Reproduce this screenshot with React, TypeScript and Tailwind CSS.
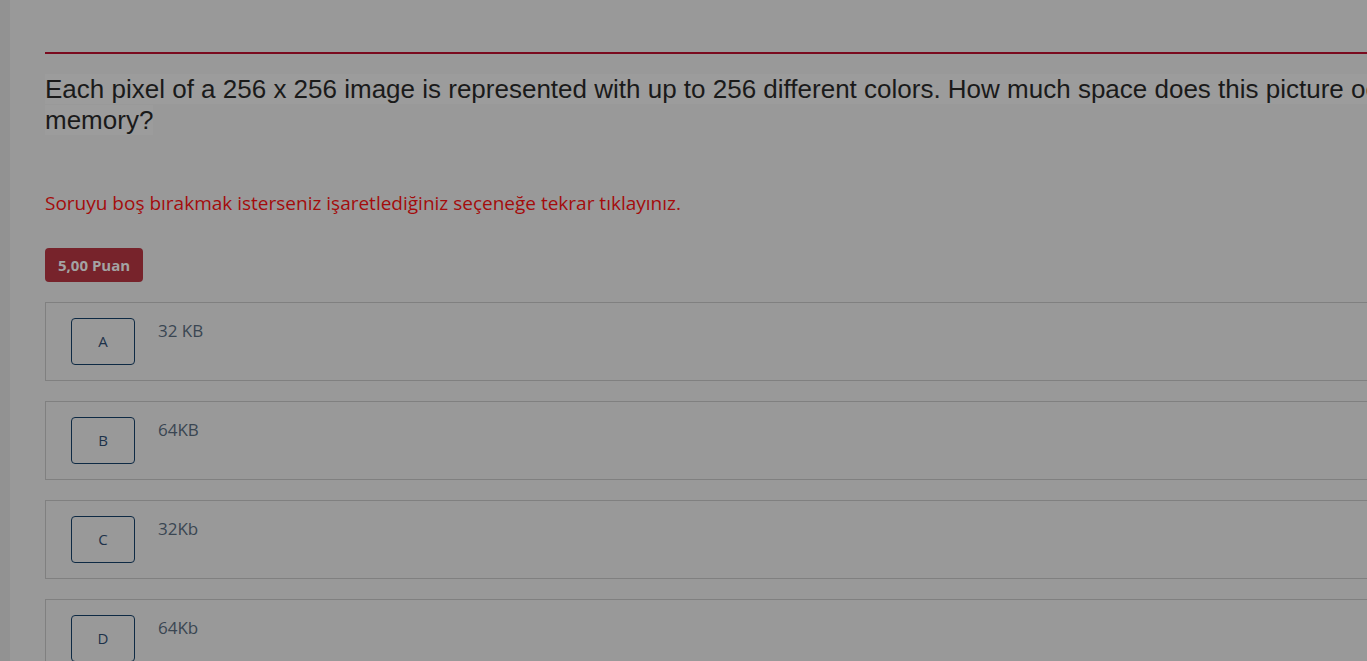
import React from 'react';

const options = [
    { letter: 'A', text: '32 KB' },
    { letter: 'B', text: '64KB' },
    { letter: 'C', text: '32Kb' },
    { letter: 'D', text: '64Kb' },
];

export default function App() {
    return (
        <div className="flex h-[661px] w-full overflow-hidden bg-[#999999]">
            {/* sidebar edge */}
            <div className="w-[10px] shrink-0 bg-[#929292]" />

            <div className="w-[1560px] shrink-0 pl-[35px] pt-[52px]">
                <div className="h-[2px] bg-[#7a0a1e]" />

                <p className="mt-[20px] w-[1505px] font-['Liberation_Sans',Arial,sans-serif] text-[26px] leading-[31px] text-[#1a1a1a]">
                    <span className="bg-[#9c9c9c]">
                        Each pixel of a 256 x 256 image is represented with up to 256 different colors. How much space does this picture occupy in memory?
                    </span>
                </p>

                <p className="mt-[55px] font-['Open_Sans','Noto_Sans',sans-serif] text-[19px] leading-[24px] text-[#a40c0c]">
                    Soruyu boş bırakmak isterseniz işaretlediğiniz seçeneğe tekrar tıklayınız.
                </p>

                <div className="mt-[33px] inline-flex h-[34px] items-center rounded-[4px] bg-[#77232b] px-[13px] font-['Open_Sans','Noto_Sans',sans-serif] text-[15px] font-bold text-[#a3a3a3]">
                    5,00 Puan
                </div>

                <div className="mt-[20px] flex flex-col gap-[20px]">
                    {options.map((o) => (
                        <div
                            key={o.letter}
                            className="flex h-[79px] items-start gap-[23px] border border-[#808080] pl-[25px] pt-[15px]"
                        >
                            <div className="flex h-[47px] w-[64px] shrink-0 items-center justify-center rounded-[4px] border border-[#0e2a44] font-['Open_Sans','Noto_Sans',sans-serif] text-[15px] text-[#1d324a]">
                                {o.letter}
                            </div>
                            <span className="mt-[1px] font-['Open_Sans','Noto_Sans',sans-serif] text-[17px] leading-[24px] text-[#3a4652]">
                                {o.text}
                            </span>
                        </div>
                    ))}
                </div>
            </div>
        </div>
    );
}
